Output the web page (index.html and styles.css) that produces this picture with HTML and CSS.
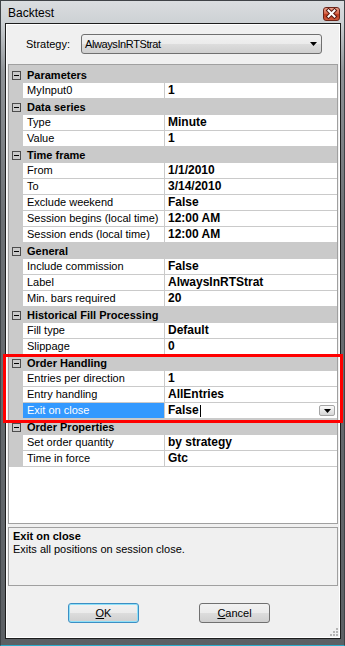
FILE: index.html
```html
<!DOCTYPE html>
<html lang="en">

<head>
    <meta charset="UTF-8">
    <meta name="viewport" content="width=device-width, initial-scale=1.0">
    <title>Backtest</title>
    <link rel="stylesheet" href="styles.css">
</head>

<body>
    <div class="window">
        <div class="titlebar">
            <span class="title">Backtest</span>
            <div class="close-btn">
                <svg width="15" height="12" viewBox="0 0 15 12">
                    <path d="M4.5 2.5l6 6M10.5 2.5l-6 6" stroke="#5a1a10" stroke-width="4" stroke-linecap="square" fill="none"/>
                    <path d="M4.5 2.5l6 6M10.5 2.5l-6 6" stroke="#ffffff" stroke-width="2" stroke-linecap="square" fill="none"/>
                </svg>
            </div>
        </div>

        <div class="client">
            <div class="strategy-row">
                <span class="strategy-label">Strategy:</span>
                <div class="combo">
                    <span class="combo-text">AlwaysInRTStrat</span>
                    <svg width="7" height="4" viewBox="0 0 7 4"><path d="M0 0h7l-3.5 4z" fill="#000"/></svg>
                </div>
            </div>

            <div class="grid">
                <div class="rows">
                    <div class="row category"><span class="gutter"><span class="toggle"></span></span><span class="cat-name">Parameters</span></div>
                    <div class="row"><span class="gutter"></span><span class="name">MyInput0</span><span class="value">1</span></div>

                    <div class="row category"><span class="gutter"><span class="toggle"></span></span><span class="cat-name">Data series</span></div>
                    <div class="row"><span class="gutter"></span><span class="name">Type</span><span class="value">Minute</span></div>
                    <div class="row"><span class="gutter"></span><span class="name">Value</span><span class="value">1</span></div>

                    <div class="row category"><span class="gutter"><span class="toggle"></span></span><span class="cat-name">Time frame</span></div>
                    <div class="row"><span class="gutter"></span><span class="name">From</span><span class="value">1/1/2010</span></div>
                    <div class="row"><span class="gutter"></span><span class="name">To</span><span class="value">3/14/2010</span></div>
                    <div class="row"><span class="gutter"></span><span class="name">Exclude weekend</span><span class="value">False</span></div>
                    <div class="row"><span class="gutter"></span><span class="name">Session begins (local time)</span><span class="value">12:00 AM</span></div>
                    <div class="row"><span class="gutter"></span><span class="name">Session ends (local time)</span><span class="value">12:00 AM</span></div>

                    <div class="row category"><span class="gutter"><span class="toggle"></span></span><span class="cat-name">General</span></div>
                    <div class="row"><span class="gutter"></span><span class="name">Include commission</span><span class="value">False</span></div>
                    <div class="row"><span class="gutter"></span><span class="name">Label</span><span class="value">AlwaysInRTStrat</span></div>
                    <div class="row"><span class="gutter"></span><span class="name">Min. bars required</span><span class="value">20</span></div>

                    <div class="row category"><span class="gutter"><span class="toggle"></span></span><span class="cat-name">Historical Fill Processing</span></div>
                    <div class="row"><span class="gutter"></span><span class="name">Fill type</span><span class="value">Default</span></div>
                    <div class="row"><span class="gutter"></span><span class="name">Slippage</span><span class="value">0</span></div>

                    <div class="row category"><span class="gutter"><span class="toggle"></span></span><span class="cat-name">Order Handling</span></div>
                    <div class="row"><span class="gutter"></span><span class="name">Entries per direction</span><span class="value">1</span></div>
                    <div class="row"><span class="gutter"></span><span class="name">Entry handling</span><span class="value">AllEntries</span></div>
                    <div class="row selected"><span class="gutter"></span><span class="name">Exit on close</span><span class="value">False<span class="caret"></span>
                        <span class="drop-btn"><svg width="7" height="4" viewBox="0 0 7 4"><path d="M0 0h7l-3.5 4z" fill="#000"/></svg></span></span></div>

                    <div class="row category"><span class="gutter"><span class="toggle"></span></span><span class="cat-name">Order Properties</span></div>
                    <div class="row"><span class="gutter"></span><span class="name">Set order quantity</span><span class="value">by strategy</span></div>
                    <div class="row"><span class="gutter"></span><span class="name">Time in force</span><span class="value">Gtc</span></div>
                </div>
            </div>

            <div class="help">
                <div class="help-title">Exit on close</div>
                <div>Exits all positions on session close.</div>
            </div>

            <div class="buttons">
                <button class="btn default"><u>O</u>K</button>
                <button class="btn"><u>C</u>ancel</button>
            </div>

            <svg class="grip" width="8" height="8" viewBox="0 0 8 8">
                <rect x="6" y="0" width="2" height="2" fill="#b5b5b5"/>
                <rect x="3" y="3" width="2" height="2" fill="#b5b5b5"/>
                <rect x="6" y="3" width="2" height="2" fill="#b5b5b5"/>
                <rect x="0" y="6" width="2" height="2" fill="#b5b5b5"/>
                <rect x="3" y="6" width="2" height="2" fill="#b5b5b5"/>
                <rect x="6" y="6" width="2" height="2" fill="#b5b5b5"/>
            </svg>
        </div>

        <!-- red callout around the Order Handling block -->
        <div class="highlight"></div>
    </div>
</body>

</html>
```

FILE: styles.css
```css
body {
    margin: 0;
    background: #fff;
    font-family: "Liberation Sans", Arial, sans-serif;
    font-size: 11px;
    color: #000;
}

.window {
    position: relative;
    width: 345px;
    height: 646px;
    box-sizing: border-box;
    border: 1px solid #3f4347;
    border-bottom-color: #2aaccc;
    padding: 0 3px 6px 4px;
    background: linear-gradient(to bottom, #dadde0 0, #cdd1d4 22px, #8f9397 70px, #6c7074 220px, #5c6064 100%);
}

.titlebar {
    display: flex;
    align-items: center;
    height: 22px;
    padding: 1px 1px 0 3px;
    box-sizing: border-box;
}

.title {
    font-size: 12px;
}

.close-btn {
    margin-left: auto;
    align-self: flex-start;
    margin-top: 5px;
    width: 17px;
    height: 14px;
    box-sizing: border-box;
    border: 1px solid #6b2418;
    border-radius: 3px;
    background: linear-gradient(to bottom, #eba28d 0, #d8674b 45%, #bd3a1e 55%, #d0593b 100%);
    display: flex;
    align-items: center;
    justify-content: center;
}

.client {
    position: relative;
    height: 616px;
    box-sizing: border-box;
    border: 1px solid #1d1d1d;
    padding: 1px;
    box-shadow: inset 0 0 0 1px #fff;
    background: #f0f0f0;
    display: flex;
    flex-direction: column;
}

.strategy-row {
    display: flex;
    align-items: center;
    margin-top: 9px;
    padding-left: 19px;
    height: 20px;
}

.strategy-label {
    width: 55px;
}

.combo {
    width: 241px;
    height: 20px;
    box-sizing: border-box;
    border: 1px solid #707070;
    border-radius: 3px;
    background: linear-gradient(to bottom, #f2f2f2 0, #ebebeb 50%, #dddddd 50%, #cfcfcf 100%);
    display: flex;
    align-items: center;
    justify-content: space-between;
    padding: 0 4px 0 3px;
}

.combo-text {
    letter-spacing: -0.4px;
}

.grid {
    margin: 10px 1px 0;
    height: 460px;
    box-sizing: border-box;
    border: 1px solid #a0a0a0;
    background: #fff;
}

.rows {
    border-top: 2px solid #cacaca;
}

.row {
    display: flex;
    height: 16px;
    box-sizing: border-box;
    border-bottom: 1px solid #cacaca;
    line-height: 15px;
}

.row.category {
    background: #cacaca;
    font-weight: bold;
    border-bottom: none;
    line-height: 16px;
}

.gutter {
    flex: none;
    width: 14px;
    background: #cacaca;
    display: flex;
    align-items: center;
}

.toggle {
    position: relative;
    width: 9px;
    height: 9px;
    box-sizing: border-box;
    border: 1px solid #4d4d4d;
    margin-left: 3px;
}

.toggle::after {
    content: "";
    position: absolute;
    left: 1px;
    right: 1px;
    top: 3px;
    height: 1px;
    background: #000;
}

.cat-name {
    padding-left: 4px;
    white-space: nowrap;
}

.name {
    flex: none;
    width: 142px;
    box-sizing: border-box;
    border-right: 1px solid #cacaca;
    padding-left: 4px;
    white-space: nowrap;
    overflow: hidden;
}

.value {
    flex: 1;
    display: flex;
    align-items: center;
    padding-left: 3px;
    font-size: 12px;
    font-weight: bold;
    white-space: nowrap;
}

.row.selected .name {
    background: #3399ff;
    color: #fff;
}

.caret {
    width: 1px;
    height: 12px;
    margin-left: 1px;
    background: #000;
}

.drop-btn {
    margin-left: auto;
    margin-right: 2px;
    width: 16px;
    height: 11px;
    box-sizing: border-box;
    border: 1px solid #a5a5a5;
    border-radius: 2px;
    background: linear-gradient(to bottom, #fbfbfb 0, #e8e8e8 50%, #d6d6d6 100%);
    display: flex;
    align-items: center;
    justify-content: center;
}

.help {
    margin: 3px 1px 0;
    height: 59px;
    box-sizing: border-box;
    border: 1px solid #a0a0a0;
    padding: 2px 4px 0;
    line-height: 13px;
}

.help-title {
    font-weight: bold;
}

.buttons {
    display: flex;
    gap: 60px;
    margin-top: 17px;
    padding-left: 61px;
}

.btn {
    width: 71px;
    height: 20px;
    padding: 0;
    box-sizing: border-box;
    border: 1px solid #707070;
    border-radius: 3px;
    background: linear-gradient(to bottom, #f2f2f2 0, #ebebeb 50%, #dddddd 50%, #cfcfcf 100%);
    font-family: "Liberation Sans", Arial, sans-serif;
    font-size: 11px;
    color: #000;
}

.btn.default {
    border-color: #3c8fc4;
    box-shadow: inset 0 0 0 1px #8fe0f8;
}

.grip {
    position: absolute;
    right: 2px;
    bottom: 2px;
}

.highlight {
    position: absolute;
    left: 2px;
    top: 353px;
    width: 340px;
    height: 69px;
    box-sizing: border-box;
    border: 3px solid #ff0000;
}
```
